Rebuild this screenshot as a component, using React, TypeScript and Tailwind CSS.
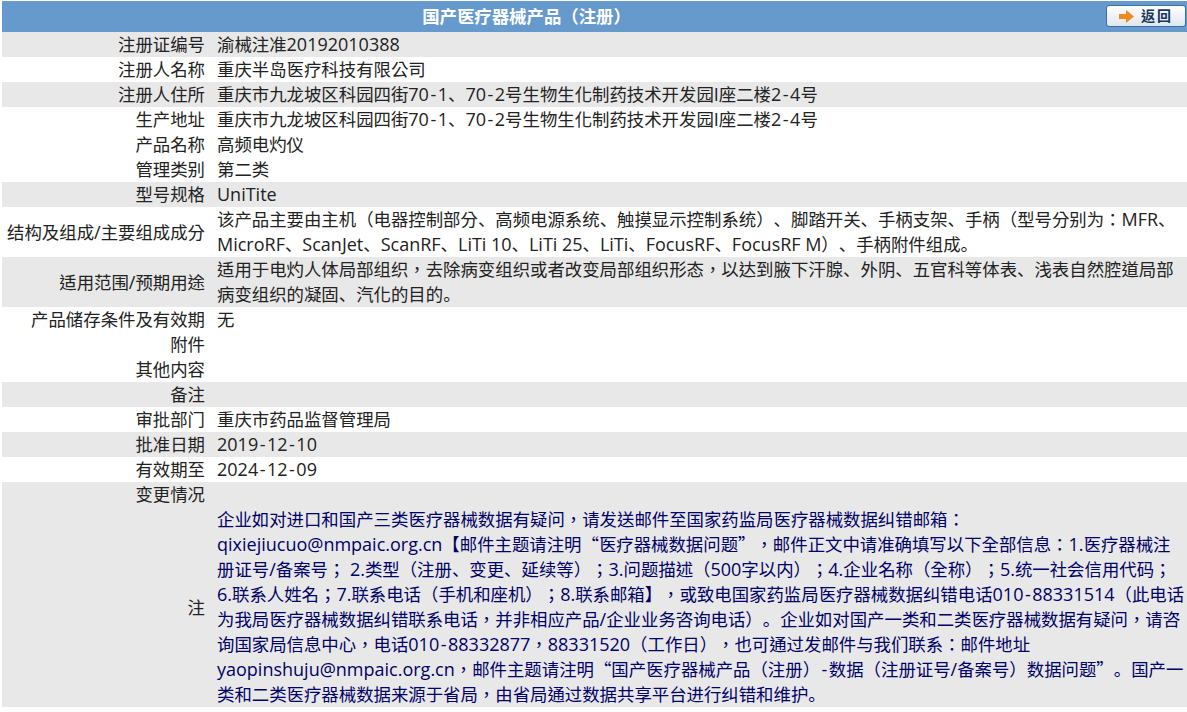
import type { ReactNode } from 'react'

const rows: [string, string, boolean?][] = [
  ['注册证编号', '渝械注准20192010388', true],
  ['注册人名称', '重庆半岛医疗科技有限公司'],
  ['注册人住所', '重庆市九龙坡区科园四街70-1、70-2号生物生化制药技术开发园I座二楼2-4号', true],
  ['生产地址', '重庆市九龙坡区科园四街70-1、70-2号生物生化制药技术开发园I座二楼2-4号'],
  ['产品名称', '高频电灼仪'],
  ['管理类别', '第二类'],
  ['型号规格', 'UniTite', true],
  ['结构及组成/主要组成成分', '该产品主要由主机（电器控制部分、高频电源系统、触摸显示控制系统）、脚踏开关、手柄支架、手柄（型号分别为：MFR、MicroRF、ScanJet、ScanRF、LiTi 10、LiTi 25、LiTi、FocusRF、FocusRF M）、手柄附件组成。'],
  ['适用范围/预期用途', '适用于电灼人体局部组织，去除病变组织或者改变局部组织形态，以达到腋下汗腺、外阴、五官科等体表、浅表自然腔道局部病变组织的凝固、汽化的目的。', true],
  ['产品储存条件及有效期', '无'],
  ['附件', ''],
  ['其他内容', ''],
  ['备注', '', true],
  ['审批部门', '重庆市药品监督管理局'],
  ['批准日期', '2019-12-10', true],
  ['有效期至', '2024-12-09'],
  ['变更情况', '', true],
]

const noteStart = '企业如对进口和国产三类医疗器械数据有疑问，请发送邮件至国家药监局医疗器械数据纠错邮箱：'
const noteEmail = 'qixiejiucuo@nmpaic.org.cn【'
const noteRest = '邮件主题请注明“医疗器械数据问题”，邮件正文中请准确填写以下全部信息：1.医疗器械注册证号/备案号； 2.类型（注册、变更、延续等）；3.问题描述（500字以内）；4.企业名称（全称）；5.统一社会信用代码；6.联系人姓名；7.联系电话（手机和座机）；8.联系邮箱】，或致电国家药监局医疗器械数据纠错电话010-88331514（此电话为我局医疗器械数据纠错联系电话，并非相应产品/企业业务咨询电话）。企业如对国产一类和二类医疗器械数据有疑问，请咨询国家局信息中心，电话010-88332877，88331520（工作日），也可通过发邮件与我们联系：邮件地址yaopinshuju@nmpaic.org.cn，邮件主题请注明“国产医疗器械产品（注册）-数据（注册证号/备案号）数据问题”。国产一类和二类医疗器械数据来源于省局，由省局通过数据共享平台进行纠错和维护。'

// latin runs sit a bit wider in the original font, hyphens wider still, quotes are full width
function fmt(text: string): ReactNode[] {
  return text.split(/([-“”、。]|[A-Za-z0-9@./]+)/).map((part, i) => {
    if (part === '-') return <span key={i} className="px-[1.5px] text-[18px] leading-none">-</span>
    if (part === '“' || part === '”') return <span key={i} className="leading-none [font-family:'Noto_Sans_CJK_TC',sans-serif]">{part}</span>
    if (part === '、' || part === '。') return <span key={i} className="leading-none [font-family:'Noto_Sans_CJK_SC',sans-serif]">{part}</span>
    if (/^[A-Za-z0-9@./]+$/.test(part)) return <span key={i} className="text-[18px] leading-none">{part}</span>
    return part
  })
}

function Row({ label, value, shaded }: { label: string; value: string; shaded?: boolean }) {
  return (
    <div className={`flex items-center min-h-[25px] ${shaded ? 'bg-[#e8e8e8]' : ''}`}>
      <div className="w-[203px] shrink-0 text-right">{fmt(label)}</div>
      <div className="ml-3 flex-1 min-w-0">{fmt(value)}</div>
    </div>
  )
}

export default function App() {
  return (
    <div className="h-[712px] overflow-hidden bg-white pt-px pl-0.5 text-[17.4px] leading-[25px] text-[#222222] [text-spacing-trim:space-all] [font-family:'Open_Sans','Noto_Sans_CJK_TC',sans-serif]">
      <div className="relative flex h-[31px] items-center justify-center bg-[#6699cc] pr-[136px] font-bold text-white">
        国产医疗器械产品（注册）
        <button className="absolute right-px top-[4px] flex h-[22px] w-[80px] items-center justify-center gap-[7px] rounded-[3px] border border-[#3a6ea5] bg-gradient-to-b from-white to-[#dfe6ee] text-[14px] font-bold leading-none tracking-[2px] text-[#17375e]">
          <svg width="15" height="13" viewBox="0 0 15 13"><path d="M0 4h7V0l8 6.500-8 6.500V9H0z" fill="#f08a1c" /></svg>
          返回
        </button>
      </div>
      {rows.map(([label, value, shaded]) => (
        <Row key={label} label={label} value={value} shaded={shaded} />
      ))}
      <div className="flex items-center bg-[#e8e8e8]">
        <div className="w-[203px] shrink-0 text-right">注</div>
        <div className="ml-3 flex-1 min-w-0 pr-0.5 text-[#000066]">
          {noteStart}
          <span className="whitespace-nowrap">{fmt(noteEmail)}</span>
          {fmt(noteRest)}
        </div>
      </div>
    </div>
  )
}
